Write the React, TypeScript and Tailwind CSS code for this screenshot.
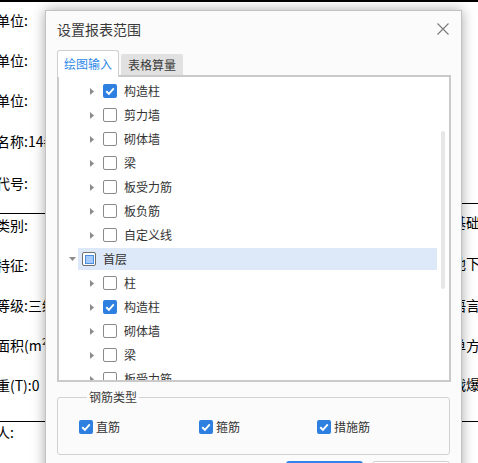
import type { JSX } from 'react';

type TreeRow = {
  label: string;
  level: 0 | 1;
  state: 'on' | 'off' | 'partial';
  selected?: boolean;
};

const treeRows: TreeRow[] = [
  { label: '构造柱', level: 1, state: 'on' },
  { label: '剪力墙', level: 1, state: 'off' },
  { label: '砌体墙', level: 1, state: 'off' },
  { label: '梁', level: 1, state: 'off' },
  { label: '板受力筋', level: 1, state: 'off' },
  { label: '板负筋', level: 1, state: 'off' },
  { label: '自定义线', level: 1, state: 'off' },
  { label: '首层', level: 0, state: 'partial', selected: true },
  { label: '柱', level: 1, state: 'off' },
  { label: '构造柱', level: 1, state: 'on' },
  { label: '砌体墙', level: 1, state: 'off' },
  { label: '梁', level: 1, state: 'off' },
  { label: '板受力筋', level: 1, state: 'off' },
];

function CheckBox({ state }: { state: 'on' | 'off' | 'partial' }): JSX.Element {
  if (state === 'on') {
    return (
      <span className="w-[14px] h-[14px] shrink-0 rounded-[2px] bg-[#2d7fe0] flex items-center justify-center">
        <svg width="12" height="12" viewBox="0 0 12 12">
          <path d="M2.2 6.2 L4.9 8.8 L9.8 3.4" fill="none" stroke="#fff" strokeWidth="1.9" />
        </svg>
      </span>
    );
  }
  if (state === 'partial') {
    return (
      <span className="w-[14px] h-[14px] shrink-0 rounded-[2px] border border-[#6f6f6f] bg-white flex items-center justify-center">
        <span className="w-[9px] h-[9px] bg-[#a6cbfa] border border-[#4a8fe3]" />
      </span>
    );
  }
  return <span className="w-[14px] h-[14px] shrink-0 rounded-[2px] border border-[#8a8a8a] bg-white" />;
}

function Arrow({ open }: { open?: boolean }): JSX.Element {
  return open ? (
    <svg width="7" height="4" viewBox="0 0 7 4">
      <path d="M0 0 L7 0 L3.5 4 Z" fill="#8c8c8c" />
    </svg>
  ) : (
    <svg width="4" height="7" viewBox="0 0 4 7">
      <path d="M0 0 L4 3.5 L0 7 Z" fill="#8c8c8c" />
    </svg>
  );
}

function BgLine({ text, mt }: { text: string; mt: string }): JSX.Element {
  return <div className={`${mt} h-[20px] leading-[20px] whitespace-nowrap`}>{text}</div>;
}

export default function App(): JSX.Element {
  return (
    <div className="relative w-[478px] h-[463px] overflow-hidden bg-white border-t-2 border-black flex text-[14px] text-black font-['Noto_Sans_CJK_SC',sans-serif]">
      {/* page behind the dialog, left column */}
      <div className="w-[140px] -ml-[4px] shrink-0 flex flex-col">
        <BgLine mt="mt-[8px]" text="单位:" />
        <BgLine mt="mt-[20px]" text="单位:" />
        <BgLine mt="mt-[20px]" text="单位:" />
        <BgLine mt="mt-[21px]" text="名称:14#楼" />
        <BgLine mt="mt-[22px]" text="代号:" />
        <div className="mt-[20px] h-px bg-black w-[50px]" />
        <BgLine mt="mt-[1px]" text="类别:" />
        <BgLine mt="mt-[20px]" text="特征:" />
        <BgLine mt="mt-[20px]" text="等级:三级" />
        <BgLine mt="mt-[20px]" text="面积(m²):" />
        <BgLine mt="mt-[20px]" text="重(T):0" />
        <div className="mt-[26px] h-px bg-black w-[50px]" />
        <BgLine mt="mt-0" text="人:" />
      </div>
      <div className="flex-1" />
      {/* page behind the dialog, right column */}
      <div className="w-[26px] shrink-0 flex flex-col">
        <div className="mt-[201px] h-px bg-black" />
        <BgLine mt="mt-[8px]" text="基础" />
        <BgLine mt="mt-[21px]" text="地下" />
        <BgLine mt="mt-[22px]" text="语言" />
        <BgLine mt="mt-[20px]" text="单方" />
        <BgLine mt="mt-[19px]" text="战爆" />
        <div className="mt-[27px] h-px bg-black" />
      </div>

      {/* dialog */}
      <div className="absolute left-[45px] top-[8px] w-[417px] bg-[#fbfbfb] border border-[#c2c2c2] shadow-[0_0_12px_rgba(0,0,0,0.35)] flex flex-col text-[#333] text-[12px]">
        <div className="h-[36px] pl-[11px] pr-[12px] flex items-center justify-between">
          <span className="text-[14px] text-[#3a3a3a]">设置报表范围</span>
          <svg width="12" height="12" viewBox="0 0 12 12">
            <path d="M0.5 0.5 L11.5 11.5 M11.5 0.5 L0.5 11.5" stroke="#7a7a7a" strokeWidth="1.1" />
          </svg>
        </div>

        <div className="mt-[3px] ml-[11px] -mb-[2px] flex items-end gap-[2px] relative z-10">
          <div className="h-[27px] px-[6px] pt-[5px] bg-white border-t border-l border-r border-[#cfcfcf] rounded-t-[3px] text-[#2f8aea] leading-[16px]">
            绘图输入
          </div>
          <div className="h-[21px] mb-[2px] px-[7px] bg-[#e1e1e1] rounded-t-[2px] flex items-center text-[#3a3a3a]">
            表格算量
          </div>
        </div>

        <div className="ml-[11px] mr-[10px] h-[307px] border-2 border-[#cacaca] bg-white flex overflow-hidden">
          <div className="flex-1 pt-[2px] flex flex-col">
            {treeRows.map((row, i) => (
              <div
                key={i}
                className={`h-[24px] shrink-0 flex items-center ${row.level === 0 ? 'pl-[10px]' : 'pl-[31px]'}`}
              >
                <span className="w-[13px] shrink-0 flex items-center">
                  <Arrow open={row.level === 0} />
                </span>
                <div
                  className={
                    row.selected
                      ? 'flex-1 h-[22px] -ml-[4px] pl-[4px] bg-[#dde8f8] flex items-center'
                      : 'flex items-center'
                  }
                >
                  <CheckBox state={row.state} />
                  <span className="ml-[7px] whitespace-nowrap">{row.label}</span>
                </div>
              </div>
            ))}
          </div>
          <div className="w-[4px] ml-[4px] mr-[4px] pt-[54px]">
            <div className="h-[158px] rounded-full bg-[#e6e6e6]" />
          </div>
        </div>

        <fieldset className="mt-[7px] ml-[11px] mr-[11px] border border-[#d2d2d2] rounded-[3px] pl-[21px] pt-[12px] pb-[17px]">
          <legend className="ml-[8px] px-[2px] leading-[16px] text-[#3a3a3a]">钢筋类型</legend>
          <div className="h-[20px] flex items-center">
            <div className="w-[120px] flex items-center">
              <CheckBox state="on" />
              <span className="ml-[3px]">直筋</span>
            </div>
            <div className="w-[118px] flex items-center">
              <CheckBox state="on" />
              <span className="ml-[3px]">箍筋</span>
            </div>
            <div className="flex items-center">
              <CheckBox state="on" />
              <span className="ml-[3px]">措施筋</span>
            </div>
          </div>
        </fieldset>

        <div className="mt-[6px] mr-[11px] mb-[10px] flex justify-end gap-[9px]">
          <button className="w-[77px] h-[28px] rounded-[3px] bg-[#2d86e8] text-white">确定</button>
          <button className="w-[78px] h-[28px] rounded-[3px] border border-[#cfcfcf] bg-white">取消</button>
        </div>
      </div>
    </div>
  );
}
